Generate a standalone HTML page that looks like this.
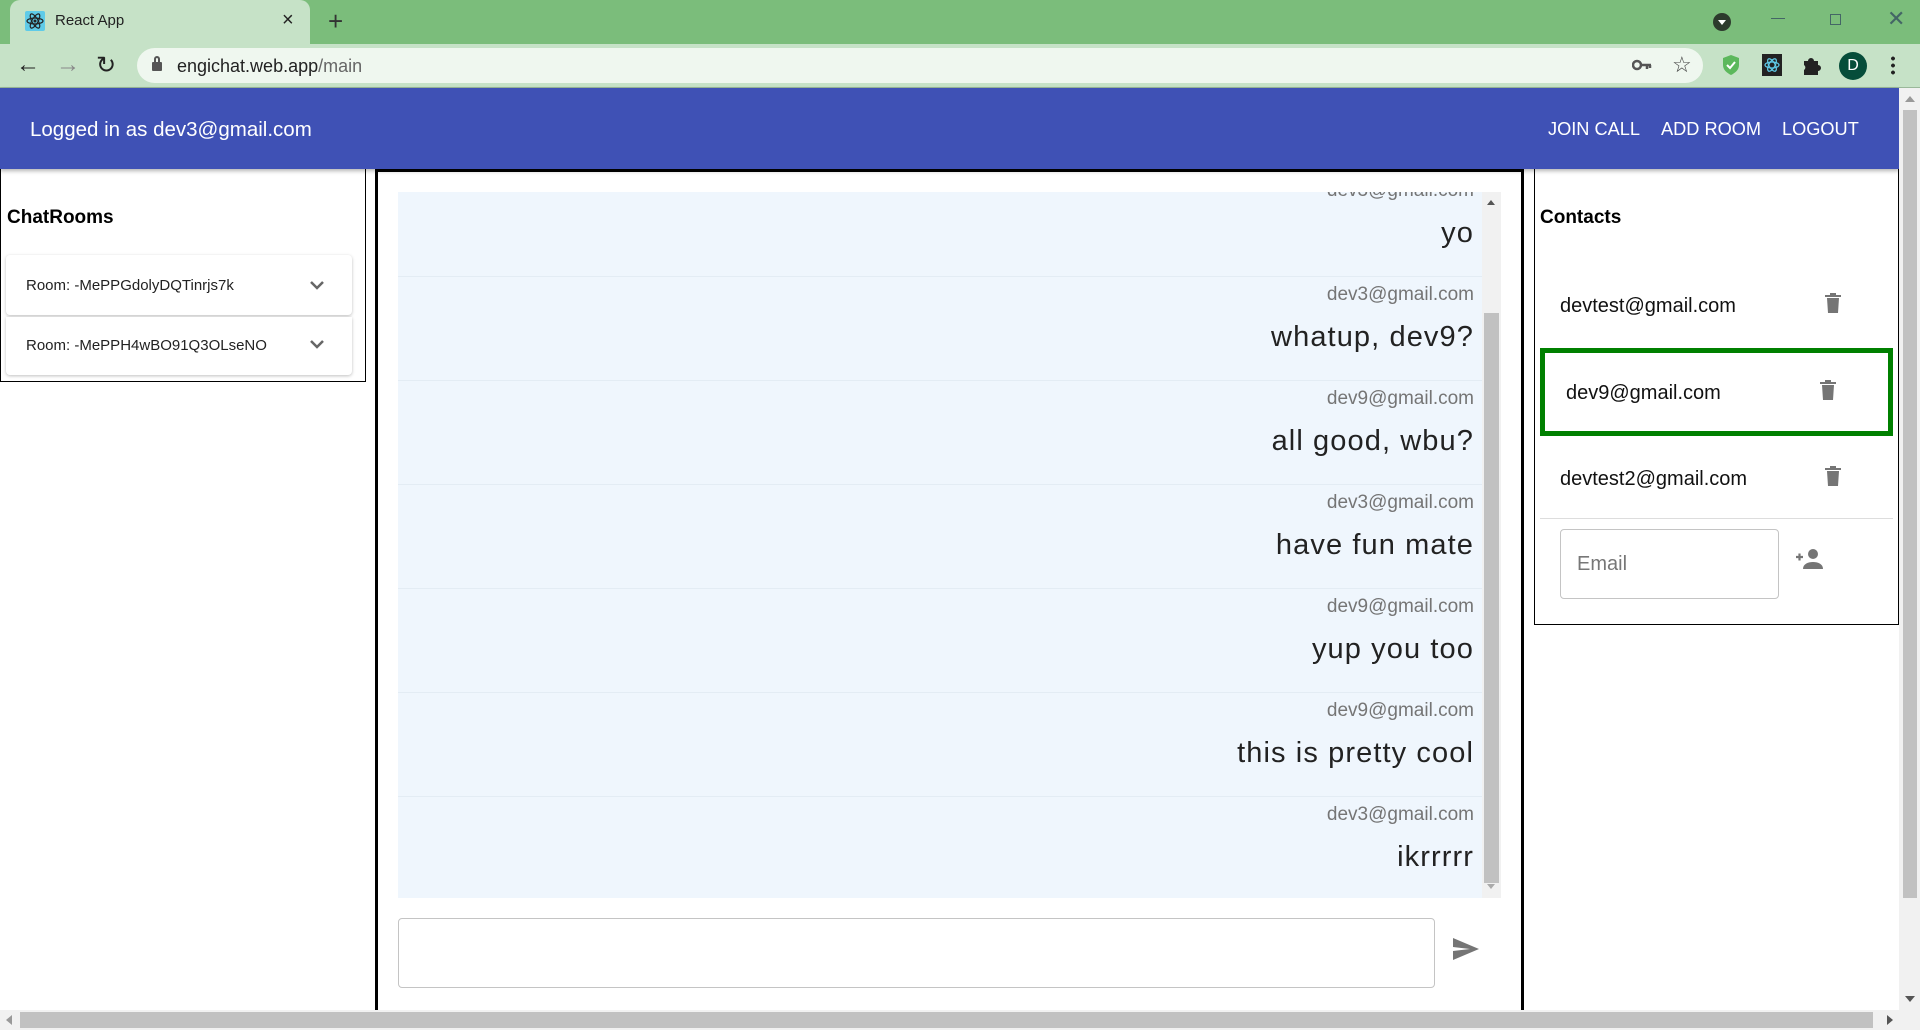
<!DOCTYPE html>
<html><head><meta charset="utf-8"><style>
*{box-sizing:border-box;margin:0;padding:0}
body{width:1920px;height:1030px;overflow:hidden;position:relative;background:#fff;font-family:"Liberation Sans",Arial,sans-serif}
.a{position:absolute}
.msgE{position:absolute;right:8px;width:100%;text-align:right;color:#757575;font-size:19px}
.msgT{position:absolute;right:8px;width:100%;text-align:right;color:#222;font-size:29px;letter-spacing:1.1px}
.sep{position:absolute;left:0;width:1084px;height:1px;background:#e3ecf4}
.trash{position:absolute;width:18px;height:22px}
</style></head><body>
<div class="a" style="left:0;top:0;width:1920px;height:44px;background:#7bbd7b"></div>
<div class="a" style="left:10px;top:0;width:300px;height:44px;background:#c6e2c7;border-radius:10px 10px 0 0"></div>
<svg class="a" style="left:25px;top:11px" width="20" height="20" viewBox="0 0 20 20"><rect width="20" height="20" rx="2" fill="#5fcbe8"/><g fill="none" stroke="#222" stroke-width="1.2"><ellipse cx="10" cy="10" rx="8" ry="3"/><ellipse cx="10" cy="10" rx="8" ry="3" transform="rotate(60 10 10)"/><ellipse cx="10" cy="10" rx="8" ry="3" transform="rotate(-60 10 10)"/></g><circle cx="10" cy="10" r="1.5" fill="#222"/></svg>
<div class="a" style="left:55px;top:12px;font-size:15px;color:#222">React App</div>
<div class="a" style="left:282px;top:9px;font-size:20px;color:#222">×</div>
<div class="a" style="left:328px;top:6px;font-size:26px;color:#333">+</div>
<svg class="a" style="left:1713px;top:13px" width="18" height="18"><circle cx="9" cy="9" r="9" fill="#2d3b2d"/><path d="M5 7h8l-4 5z" fill="#fff"/></svg>
<div class="a" style="left:1771px;top:18px;width:14px;height:1px;background:#466"></div>
<div class="a" style="left:1830px;top:14px;width:11px;height:11px;border:1px solid #466"></div>
<div class="a" style="left:1887px;top:6px;font-size:22px;color:#466">✕</div>
<div class="a" style="left:0;top:44px;width:1920px;height:44px;background:#c6e2c7;border-bottom:1px solid #9ab89a"></div>
<div class="a" style="left:16px;top:51px;font-size:24px;color:#222">←</div>
<div class="a" style="left:56px;top:51px;font-size:24px;color:#888">→</div>
<div class="a" style="left:96px;top:51px;font-size:24px;color:#222">↻</div>
<div class="a" style="left:137px;top:48px;width:1566px;height:35px;background:#eff7ef;border-radius:18px"></div>
<div class="a" style="left:152px;top:62px;width:10px;height:9px;background:#555;border-radius:1px"></div>
<div class="a" style="left:154px;top:56px;width:6px;height:8px;border:2px solid #555;border-bottom:none;border-radius:3px 3px 0 0"></div>
<div class="a" style="left:177px;top:56px;font-size:18px;color:#222">engichat.web.app<span style="color:#666">/main</span></div>
<svg class="a" style="left:1632px;top:58px" width="20" height="14"><circle cx="5" cy="7" r="4" fill="none" stroke="#555" stroke-width="2.5"/><path d="M9 7h10M15 7v4M18 7v3" stroke="#555" stroke-width="2.5"/></svg>
<div class="a" style="left:1672px;top:52px;font-size:22px;color:#444">☆</div>
<svg class="a" style="left:1722px;top:54px" width="18" height="22"><path d="M9 1l8 3v7c0 5-4 8-8 10-4-2-8-5-8-10V4z" fill="#5cb85c"/><path d="M5 11l3 3 5-6" stroke="#fff" stroke-width="2" fill="none"/></svg>
<svg class="a" style="left:1762px;top:54px" width="20" height="22"><rect width="20" height="22" fill="#222"/><g fill="none" stroke="#5fcbe8" stroke-width="1.2"><ellipse cx="10" cy="11" rx="7" ry="3"/><ellipse cx="10" cy="11" rx="7" ry="3" transform="rotate(60 10 11)"/><ellipse cx="10" cy="11" rx="7" ry="3" transform="rotate(-60 10 11)"/></g></svg>
<svg class="a" style="left:1802px;top:55px" width="20" height="20"><path d="M2 6h4a3 3 0 016 0h4v4a3 3 0 010 6v4H2v-5a3 3 0 000-5z" fill="#222"/></svg>
<div class="a" style="left:1839px;top:52px;width:28px;height:28px;border-radius:50%;background:#064d3a;color:#fff;font-size:16px;text-align:center;line-height:28px">D</div>
<div class="a" style="left:1891px;top:55px;width:4px;height:20px;background:radial-gradient(circle,#222 1.8px,transparent 2px) 0 0/4px 7px"></div>
<div class="a" style="left:0;top:88px;width:1899px;height:81px;background:#3f51b5;box-shadow:0 2px 4px rgba(0,0,0,.3)"></div>
<div class="a" style="left:30px;top:118px;font-size:20.5px;color:#fff">Logged in as dev3@gmail.com</div>
<div class="a" style="left:1548px;top:119px;font-size:18.2px;color:#fff">JOIN CALL</div>
<div class="a" style="left:1661px;top:119px;font-size:18.2px;color:#fff">ADD ROOM</div>
<div class="a" style="left:1782px;top:119px;font-size:18.2px;color:#fff">LOGOUT</div>
<div class="a" style="left:0;top:169px;width:366px;height:213px;border:1px solid #000;border-top:none"></div>
<div class="a" style="left:7px;top:207px;font-size:19px;font-weight:bold;color:#000">ChatRooms</div>
<div class="a" style="left:6px;top:255px;width:346px;height:60px;background:#fff;border-radius:4px;box-shadow:0 1px 3px rgba(0,0,0,.25)"></div>
<div class="a" style="left:6px;top:317px;width:346px;height:58px;background:#fff;border-radius:0 0 4px 4px;box-shadow:0 1px 3px rgba(0,0,0,.25)"></div>
<div class="a" style="left:26px;top:277px;font-size:15px;color:#222">Room: -MePPGdolyDQTinrjs7k</div>
<div class="a" style="left:26px;top:337px;font-size:15px;color:#222">Room: -MePPH4wBO91Q3OLseNO</div>
<svg class="a" style="left:309px;top:280px" width="16" height="10"><path d="M2 2l6 6 6-6" stroke="#666" stroke-width="2.5" fill="none"/></svg>
<svg class="a" style="left:309px;top:339px" width="16" height="10"><path d="M2 2l6 6 6-6" stroke="#666" stroke-width="2.5" fill="none"/></svg>
<div class="a" style="left:375px;top:169px;width:1149px;height:841px;border:3px solid #000;border-bottom:none"></div>
<div class="a" style="left:398px;top:192px;width:1103px;height:706px;background:#eff6fd;overflow:hidden">
 <div class="a" style="left:0;top:2px;width:1084px;height:706px">
  <div class="msgE" style="top:-14px">dev3@gmail.com</div>
  <div class="msgT" style="top:23px">yo</div>
  <div class="sep" style="top:82px"></div>
  <div class="msgE" style="top:90px">dev3@gmail.com</div>
  <div class="msgT" style="top:127px">whatup, dev9?</div>
  <div class="sep" style="top:186px"></div>
  <div class="msgE" style="top:194px">dev9@gmail.com</div>
  <div class="msgT" style="top:231px">all good, wbu?</div>
  <div class="sep" style="top:290px"></div>
  <div class="msgE" style="top:298px">dev3@gmail.com</div>
  <div class="msgT" style="top:335px">have fun mate</div>
  <div class="sep" style="top:394px"></div>
  <div class="msgE" style="top:402px">dev9@gmail.com</div>
  <div class="msgT" style="top:439px">yup you too</div>
  <div class="sep" style="top:498px"></div>
  <div class="msgE" style="top:506px">dev9@gmail.com</div>
  <div class="msgT" style="top:543px">this is pretty cool</div>
  <div class="sep" style="top:602px"></div>
  <div class="msgE" style="top:610px">dev3@gmail.com</div>
  <div class="msgT" style="top:647px">ikrrrrr</div>
 </div>
 <div class="a" style="left:1084px;top:0;width:19px;height:706px;background:#f1f1f1"></div>
 <div class="a" style="left:1086px;top:121px;width:15px;height:570px;background:#c1c1c1"></div>
 <div class="a" style="left:1089px;top:8px;width:0;height:0;border:4px solid transparent;border-bottom:5px solid #555;border-top:none"></div>
 <div class="a" style="left:1089px;top:692px;width:0;height:0;border:4px solid transparent;border-top:5px solid #aaa;border-bottom:none"></div>
</div>
<div class="a" style="left:398px;top:918px;width:1037px;height:70px;border:1px solid #c4c4c4;border-radius:4px"></div>
<svg class="a" style="left:1452px;top:937px" width="28" height="24"><path d="M1 1l26 11L1 23l0-9 17-2-17-2z" fill="#757575"/></svg>
<div class="a" style="left:1534px;top:169px;width:365px;height:456px;border:1px solid #000;border-top:none"></div>
<div class="a" style="left:1540px;top:207px;font-size:19px;font-weight:bold;color:#000">Contacts</div>
<div class="a" style="left:1560px;top:295px;font-size:20px;color:#111">devtest@gmail.com</div>
<div class="a" style="left:1540px;top:348px;width:353px;height:88px;border:5px solid #008000"></div>
<div class="a" style="left:1566px;top:382px;font-size:20px;color:#111">dev9@gmail.com</div>
<div class="a" style="left:1560px;top:468px;font-size:20px;color:#111">devtest2@gmail.com</div>
<div class="a" style="left:1540px;top:518px;width:353px;height:1px;background:#ddd"></div>
<svg class="trash" style="left:1824px;top:292px" viewBox="0 0 18 22"><path d="M1 3h16v2H1zM6 1h6v2H6zM3 6h12l-1 15H4z" fill="#757575"/></svg>
<svg class="trash" style="left:1819px;top:379px" viewBox="0 0 18 22"><path d="M1 3h16v2H1zM6 1h6v2H6zM3 6h12l-1 15H4z" fill="#757575"/></svg>
<svg class="trash" style="left:1824px;top:465px" viewBox="0 0 18 22"><path d="M1 3h16v2H1zM6 1h6v2H6zM3 6h12l-1 15H4z" fill="#757575"/></svg>
<div class="a" style="left:1560px;top:529px;width:219px;height:70px;border:1px solid #c4c4c4;border-radius:4px"></div>
<div class="a" style="left:1577px;top:553px;font-size:20px;color:#777">Email</div>
<svg class="a" style="left:1795px;top:548px" width="30" height="22"><path d="M1 9h7M4.5 5.5v7" stroke="#757575" stroke-width="2.2"/><circle cx="18" cy="6" r="5" fill="#757575"/><path d="M8 21c0-5 5-7 10-7s10 2 10 7z" fill="#757575"/></svg>
<div class="a" style="left:1899px;top:88px;width:21px;height:922px;background:#f1f1f1"></div>
<div class="a" style="left:1903px;top:110px;width:14px;height:788px;background:#c1c1c1"></div>
<div class="a" style="left:1905px;top:96px;border:5px solid transparent;border-bottom:6px solid #999;border-top:none"></div>
<div class="a" style="left:1905px;top:996px;border:5px solid transparent;border-top:6px solid #555;border-bottom:none"></div>
<div class="a" style="left:0;top:1010px;width:1920px;height:20px;background:#f1f1f1"></div>
<div class="a" style="left:20px;top:1012px;width:1853px;height:16px;background:#c1c1c1"></div>
<div class="a" style="left:6px;top:1015px;border:5px solid transparent;border-right:6px solid #999;border-left:none"></div>
<div class="a" style="left:1887px;top:1015px;border:5px solid transparent;border-left:6px solid #555;border-right:none"></div>
</body></html>
